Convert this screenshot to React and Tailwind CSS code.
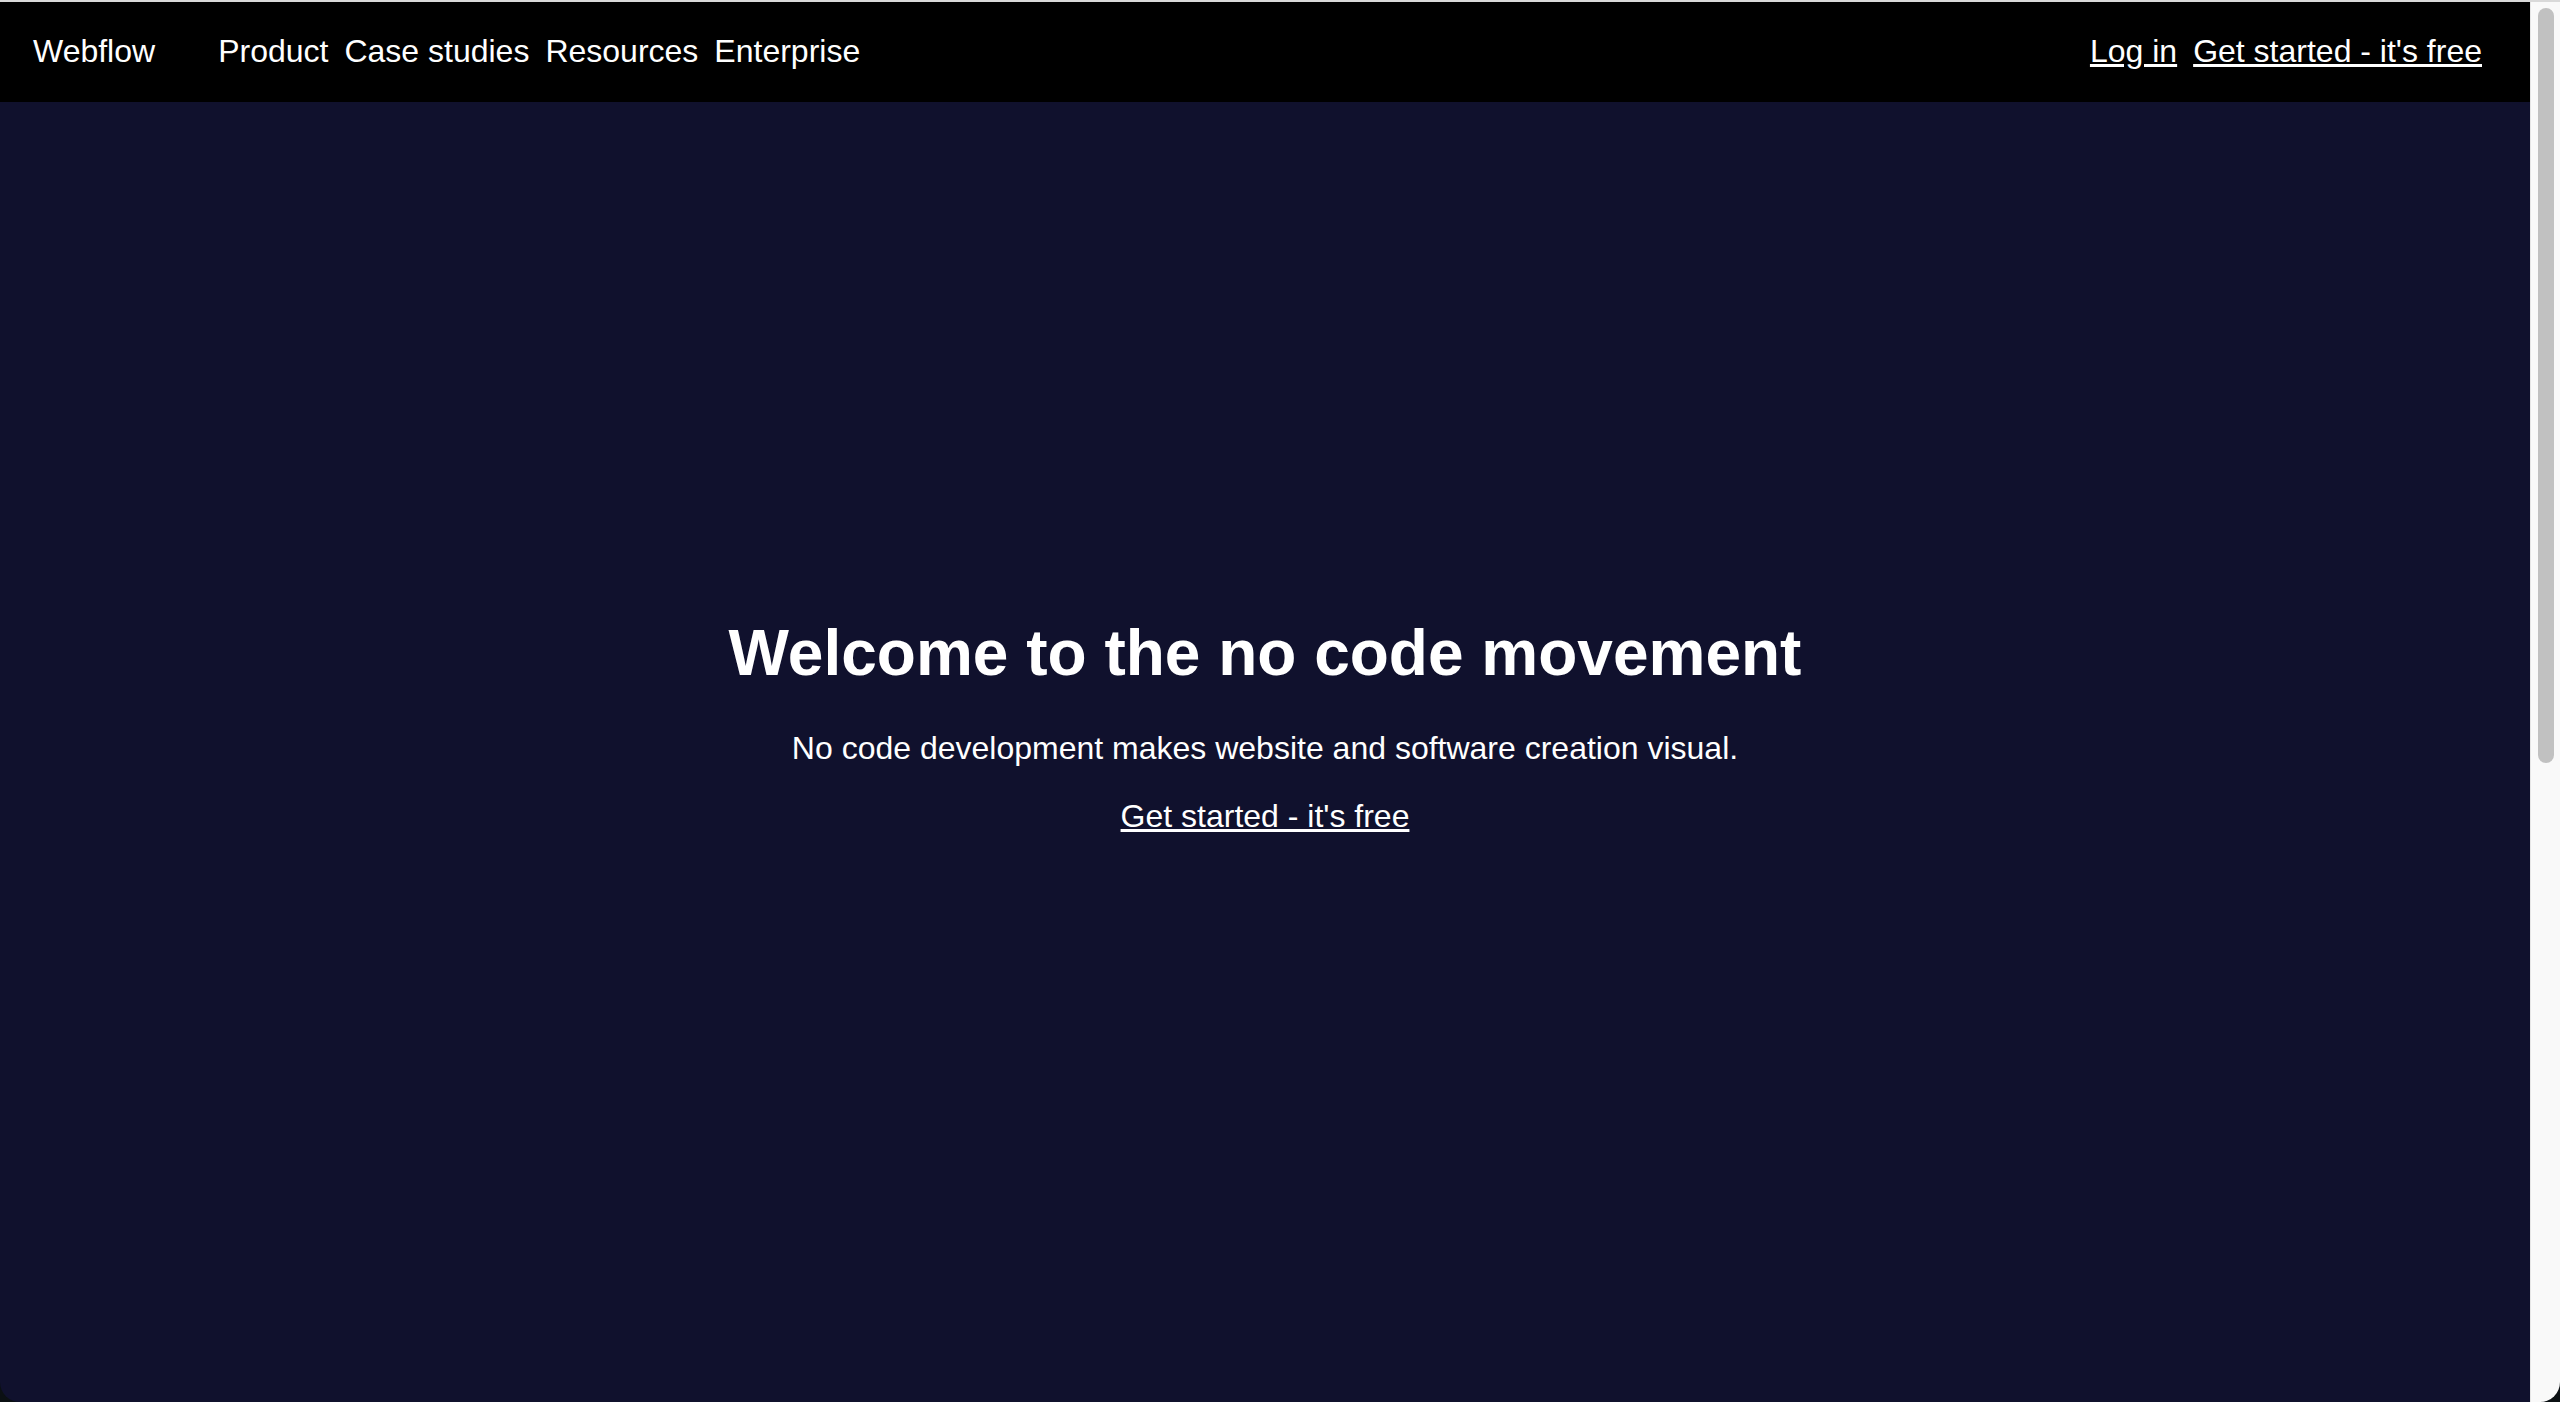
export default function App() {
  const font = { fontFamily: '"Liberation Sans", Arial, Helvetica, sans-serif' };
  return (
    <div className="w-[2560px] h-[1402px] bg-[#0b1013] overflow-hidden" style={font}>
      <div className="h-full flex flex-col rounded-b-[20px] overflow-hidden border-t-2 border-[#d9d9d9]">
        <div className="flex-1 flex flex-row min-h-0">
          <main className="flex-1 flex flex-col min-w-0">
            <nav className="h-[100px] bg-black flex items-center justify-between pl-[33px] pr-[48px] pb-[2px] text-white text-[32px] leading-[37px]">
              <div className="flex items-center">
                <a href="#" className="text-white">Webflow</a>
                <div className="flex items-center gap-[16px] ml-[63px]">
                  <a href="#">Product</a>
                  <a href="#">Case studies</a>
                  <a href="#">Resources</a>
                  <a href="#">Enterprise</a>
                </div>
              </div>
              <div className="flex items-center gap-[16px]">
                <a href="#" className="underline">Log in</a>
                <a href="#" className="underline">Get started - it's free</a>
              </div>
            </nav>
            <section className="flex-1 bg-[#10112d] flex flex-col items-center justify-center pb-[54px] text-white">
              <h1 className="text-[64px] leading-[74px] font-bold">Welcome to the no code movement</h1>
              <p className="mt-[40px] text-[32px] leading-[37px]">No code development makes website and software creation visual.</p>
              <a href="#" className="mt-[31px] text-[32px] leading-[37px] underline">Get started - it's free</a>
            </section>
          </main>
          <div className="w-[30px] bg-[#f9f9f9] border-l border-[#e6e6e6] flex flex-col items-center pt-[6px]">
            <div className="w-[16px] h-[755px] rounded-full bg-[#c1c1c1]" />
          </div>
        </div>
      </div>
    </div>
  );
}
